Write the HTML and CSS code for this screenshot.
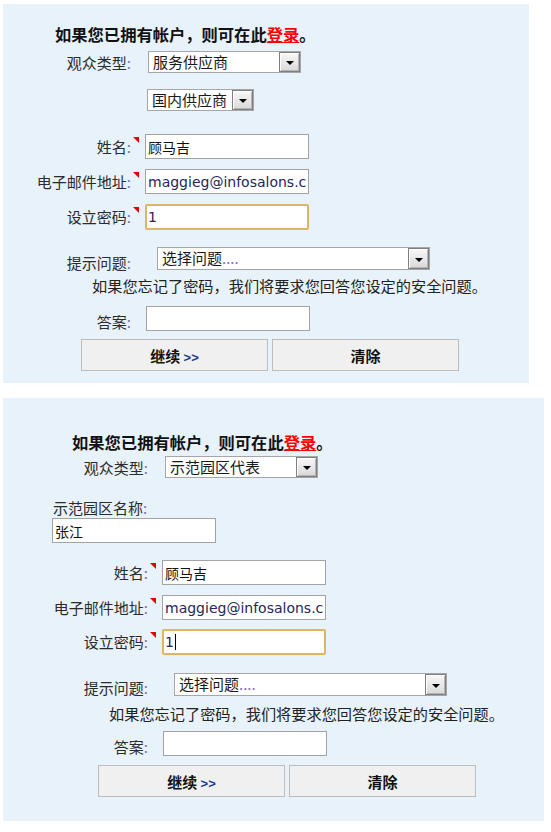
FILE: index.html
```html
<!DOCTYPE html>
<html lang="zh-CN">
  <head>
    <meta charset="UTF-8" />
    <meta name="viewport" content="width=device-width, initial-scale=1.0" />
    <title>观众注册</title>
    <link rel="stylesheet" href="styles.css">
  </head>
  <body>
    <!-- 服务供应商 -->
    <form class="panel panel-a">
      <p class="login-tip">如果您已拥有帐户，则可在此<a href="#">登录</a>。</p>

      <div class="row row-type">
        <label class="label">观众类型<span class="colon">:</span></label>
        <span class="mark"></span>
        <div class="select select-type">
          <span class="select-text">服务供应商</span>
          <span class="select-btn"></span>
        </div>
      </div>

      <div class="row row-sub">
        <div class="select select-sub">
          <span class="select-text">国内供应商</span>
          <span class="select-btn"></span>
        </div>
      </div>

      <div class="row row-name">
        <label class="label">姓名<span class="colon">:</span></label>
        <span class="mark req"></span>
        <input class="field" type="text" value="顾马吉">
      </div>

      <div class="row row-email">
        <label class="label">电子邮件地址<span class="colon">:</span></label>
        <span class="mark req"></span>
        <input class="field field-latin" type="text" value="maggieg@infosalons.com">
      </div>

      <div class="row row-pass">
        <label class="label">设立密码<span class="colon">:</span></label>
        <span class="mark req"></span>
        <input class="field field-latin field-focus" type="text" value="1">
      </div>

      <div class="row row-question">
        <label class="label">提示问题<span class="colon">:</span></label>
        <span class="mark"></span>
        <div class="select select-question">
          <span class="select-text">选择问题<span class="dots">....</span></span>
          <span class="select-btn"></span>
        </div>
      </div>

      <p class="hint">如果您忘记了密码，我们将要求您回答您设定的安全问题。</p>

      <div class="row row-answer">
        <label class="label">答案<span class="colon">:</span></label>
        <span class="mark"></span>
        <input class="field" type="text" value="">
      </div>

      <div class="actions">
        <button class="btn" type="button">继续 <span class="arrows">&gt;&gt;</span></button>
        <button class="btn" type="reset">清除</button>
      </div>
    </form>

    <!-- 示范园区代表 -->
    <form class="panel panel-b">
      <p class="login-tip">如果您已拥有帐户，则可在此<a href="#">登录</a>。</p>

      <div class="row row-type">
        <label class="label">观众类型<span class="colon">:</span></label>
        <span class="mark"></span>
        <div class="select select-type">
          <span class="select-text">示范园区代表</span>
          <span class="select-btn"></span>
        </div>
      </div>

      <label class="park-label">示范园区名称<span class="colon">:</span></label>
      <input class="field park-field" type="text" value="张江">

      <div class="row row-name">
        <label class="label">姓名<span class="colon">:</span></label>
        <span class="mark req"></span>
        <input class="field" type="text" value="顾马吉">
      </div>

      <div class="row row-email">
        <label class="label">电子邮件地址<span class="colon">:</span></label>
        <span class="mark req"></span>
        <input class="field field-latin" type="text" value="maggieg@infosalons.com">
      </div>

      <div class="row row-pass">
        <label class="label">设立密码<span class="colon">:</span></label>
        <span class="mark req"></span>
        <div class="field field-latin field-focus">1<span class="caret"></span></div>
      </div>

      <div class="row row-question">
        <label class="label">提示问题<span class="colon">:</span></label>
        <span class="mark"></span>
        <div class="select select-question">
          <span class="select-text">选择问题<span class="dots">....</span></span>
          <span class="select-btn"></span>
        </div>
      </div>

      <p class="hint">如果您忘记了密码，我们将要求您回答您设定的安全问题。</p>

      <div class="row row-answer">
        <label class="label">答案<span class="colon">:</span></label>
        <span class="mark"></span>
        <input class="field" type="text" value="">
      </div>

      <div class="actions">
        <button class="btn" type="button">继续 <span class="arrows">&gt;&gt;</span></button>
        <button class="btn" type="reset">清除</button>
      </div>
    </form>
  </body>
</html>
```

FILE: styles.css
```css
* {
  box-sizing: border-box;
}

body {
  margin: 0;
  padding: 4px 0 0 3px;
  background-color: #fff;
  color: #2b2b2b;
  font-family: "Noto Sans CJK SC", sans-serif;
  font-size: 15px;
}

.panel {
  display: block;
  margin: 0;
  background-color: #e8f2fa;
}

.panel-a {
  width: 526px;
  padding: 20px 0 12px 32px;
}

.panel-b {
  width: 541px;
  margin-top: 15px;
  padding: 34px 0 24px 49px;
}

.login-tip {
  margin: 0 0 0 20px;
  line-height: 20px;
  font-size: 16.3px;
  font-weight: bold;
  color: #111;
  white-space: nowrap;
}

.login-tip a {
  color: #f00;
}

/* rows */

.row {
  display: flex;
  align-items: flex-start;
}

.label {
  width: 96px;
  flex: none;
  text-align: right;
  line-height: 20px;
  white-space: nowrap;
}

.colon {
  color: #7a6db3;
}

.mark {
  width: 14px;
  flex: none;
}

.mark.req::before {
  content: "";
  display: block;
  width: 0;
  height: 0;
  margin: 3px 0 0 2px;
  border-top: 6px solid #e00000;
  border-left: 6px solid transparent;
}

.row-type .label {
  margin-top: 2px;
}

.row-name .label,
.row-email .label,
.row-pass .label {
  margin-top: 3px;
}

.row-question .label {
  line-height: 16px;
  margin-top: 8px;
}

.row-answer .label {
  margin-top: 6px;
}

.row-type .select {
  margin-left: 3px;
}

.row-sub {
  padding-left: 112px;
}

.row-question .select {
  margin-left: 12px;
}

.row-answer .field {
  margin-left: 1px;
}

/* vertical rhythm, first panel */

.panel-a .row-type { margin-top: 7px; }
.panel-a .row-sub { margin-top: 16px; }
.panel-a .row-name { margin-top: 23px; }
.panel-a .row-email { margin-top: 10px; }
.panel-a .row-pass { margin-top: 10px; }
.panel-a .row-question { margin-top: 17px; }
.panel-a .hint { margin-top: 6px; }
.panel-a .row-answer { margin-top: 13px; }
.panel-a .actions { margin-top: 7px; }

/* vertical rhythm, second panel */

.panel-b .row-type { margin-top: 4px; }
.panel-b .row-name { margin-top: 17px; }
.panel-b .row-email { margin-top: 10px; }
.panel-b .row-pass { margin-top: 9px; }
.panel-b .row-question { margin-top: 18px; }
.panel-b .row-question .label { margin-top: 7px; }
.panel-b .hint { margin-top: 9px; }
.panel-b .row-answer { margin-top: 10px; }
.panel-b .actions { margin-top: 8px; }

.park-label {
  display: block;
  margin: 20px 0 0 1px;
  line-height: 20px;
}

.park-field {
  display: block;
  height: 26px;
  margin-left: 3px;
  padding-left: 1px;
}

/* select boxes */

.select {
  display: flex;
  height: 22px;
  border: 1px solid #a6a6a6;
  background-color: #fff;
  flex: none;
}

.select-type {
  width: 153px;
}

.select-sub {
  width: 107px;
}

.select-question {
  width: 273px;
  height: 23px;
}

.select-text {
  flex: 1;
  padding-left: 4px;
  line-height: 20px;
  color: #1a1a1a;
  white-space: nowrap;
  overflow: hidden;
}

.dots {
  color: #8a6fc0;
}

.select-btn {
  display: flex;
  justify-content: center;
  align-items: center;
  width: 21px;
  flex: none;
  border: 1px solid #7f7f7f;
  box-shadow: inset 1px 1px 0 #fff, inset -1px -1px 0 #b5b5b5;
  background: linear-gradient(#f8f8f8, #d9d9d9);
}

.select-btn::before {
  content: "";
  width: 0;
  height: 0;
  margin-top: 2px;
  border-left: 4px solid transparent;
  border-right: 4px solid transparent;
  border-top: 4px solid #000;
}

/* text fields */

.field {
  width: 164px;
  height: 25px;
  margin: 0;
  padding: 0 2px;
  border: 1px solid #a3a3a3;
  background-color: #fff;
  color: #111;
  font-family: "DejaVu Sans", "Noto Sans CJK SC", sans-serif;
  font-size: 14px;
  flex: none;
  outline: none;
}

.field-latin {
  color: #26265a;
}

.field-focus {
  height: 26px;
  border: 2px solid #e1b463;
  border-radius: 2px;
  padding-left: 1px;
}

div.field {
  display: flex;
  align-items: center;
}

.caret {
  width: 1px;
  height: 16px;
  margin-left: 1px;
  background-color: #000;
}

/* hint and buttons */

.hint {
  margin: 0 0 0 57px;
  line-height: 16px;
  font-size: 15.2px;
  color: #222;
  white-space: nowrap;
}

.actions {
  display: flex;
  gap: 4px;
  margin-left: 46px;
}

.btn {
  width: 187px;
  height: 32px;
  border: 1px solid #bdbdbd;
  background-color: #f0f0f0;
  color: #111;
  font-family: "Noto Sans CJK SC", sans-serif;
  font-size: 15px;
  font-weight: bold;
  cursor: pointer;
}

.arrows {
  font-family: "Liberation Sans", sans-serif;
  font-size: 13px;
  color: #1b3a8c;
}
```
